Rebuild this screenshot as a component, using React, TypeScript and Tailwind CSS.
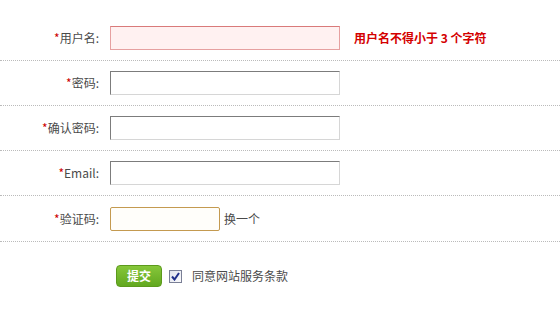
import React from "react";

const font = { fontFamily: '"Noto Sans CJK SC", "Microsoft YaHei", sans-serif' };

function Label({ text }: { text: string }) {
  return (
    <div className="w-[99px] shrink-0 text-right text-[12px] text-[#4a4a4a] leading-none">
      <span className="text-[#c00]">*</span>
      {text}:
    </div>
  );
}

function Row({ children, last }: { children: React.ReactNode; last?: boolean }) {
  return (
    <div
      className={
        last
          ? "flex h-[46px] items-center border-b border-dotted border-[#bbb]"
          : "flex h-[45px] items-center border-b border-dotted border-[#bbb]"
      }
    >
      {children}
    </div>
  );
}

const normalInput =
  "h-[24px] w-[230px] ml-[11px] border border-t-[#7c7c7c] border-l-[#7c7c7c] border-r-[#d6d6d6] border-b-[#d6d6d6] bg-white outline-none";

export default function App() {
  return (
    <div className="w-[560px] h-[316px] bg-white pt-[16px]" style={font}>
      <Row>
        <Label text="用户名" />
        <input className="h-[24px] w-[230px] ml-[11px] border border-[#e6a0a0] border-t-[#d97a7a] bg-[#fff1f1] outline-none" />
        <span className="ml-[14px] text-[12px] font-bold text-[#d40000]">
          用户名不得小于 3 个字符
        </span>
      </Row>
      <Row>
        <Label text="密码" />
        <input type="password" className={normalInput} />
      </Row>
      <Row>
        <Label text="确认密码" />
        <input type="password" className={normalInput} />
      </Row>
      <Row>
        <Label text="Email" />
        <input className={normalInput} />
      </Row>
      <Row last>
        <Label text="验证码" />
        <input className="h-[24px] w-[110px] ml-[11px] rounded-[2px] border border-[#c49a50] bg-[#fffefa] outline-none" />
        <span className="ml-[4px] text-[12px] text-[#4a4a4a]">换一个</span>
      </Row>
      <div className="flex items-center pt-[23px] pl-[116px]">
        <button className="h-[22px] w-[46px] rounded-[4px] border border-[#5c9a1c] bg-gradient-to-b from-[#86c73a] to-[#62a81f] text-[12px] font-bold text-white leading-none">
          提交
        </button>
        <span className="ml-[7px] flex h-[13px] w-[13px] items-center justify-center border border-[#7a7f96] bg-gradient-to-br from-[#dfe2ec] to-[#fafafc]">
          <svg width="9" height="9" viewBox="0 0 9 9">
            <path d="M1 4.5 L3.5 7.5 L8 1" fill="none" stroke="#1f2f8a" strokeWidth="2" />
          </svg>
        </span>
        <span className="ml-[10px] text-[12px] text-[#4a4a4a]">同意网站服务条款</span>
      </div>
    </div>
  );
}
